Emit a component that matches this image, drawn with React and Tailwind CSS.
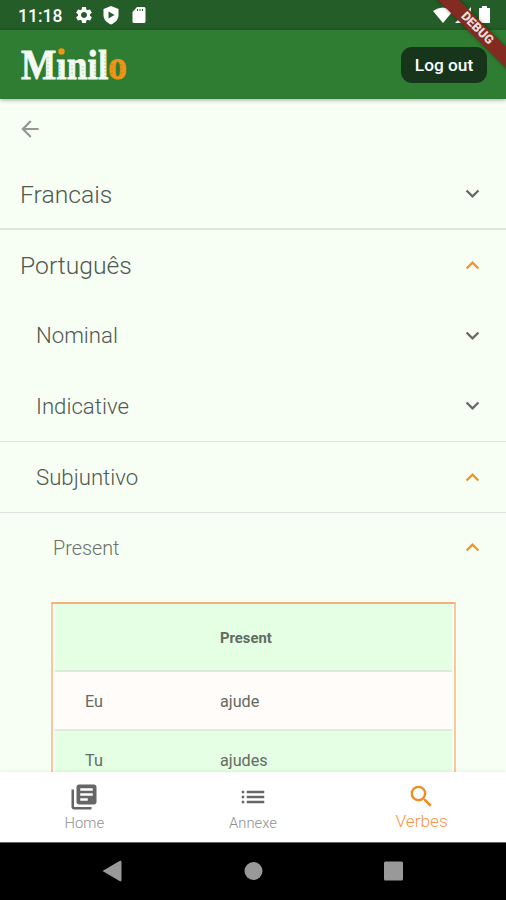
import { MdArrowBack, MdExpandLess, MdExpandMore, MdLibraryBooks, MdList, MdSearch, MdSettings } from 'react-icons/md';

const rows = [
    { label: 'Francais', open: false, text: 'pl-5 text-[24.7px] text-[#505850]', border: 'border-b-2 border-[#dfe7dd]', height: 'h-[71px]' },
    { label: 'Português', open: true, text: 'pl-5 text-[24.7px] text-[#505850]', border: '', height: 'h-[70px]' },
    { label: 'Nominal', open: false, text: 'pl-9 text-[22.2px] text-[#505850]', border: '', height: 'h-[70px]' },
    { label: 'Indicative', open: false, text: 'pl-9 text-[22.2px] text-[#505850]', border: 'border-b border-[#dde4db]', height: 'h-[72px]' },
    { label: 'Subjuntivo', open: true, text: 'pl-9 text-[22.2px] text-[#505850]', border: 'border-b border-[#dde4db]', height: 'h-[71px]' },
    { label: 'Present', open: true, text: 'pl-[53px] text-[19.8px] text-[#687068]', border: '', height: 'h-[69px]' },
];

const verbs = [
    { pronoun: 'Eu', form: 'ajude', bg: 'bg-[#fffcfa]' },
    { pronoun: 'Tu', form: 'ajudes', bg: 'bg-[#e4ffe4]' },
];

function Logo() {
    return (
        <svg width="112" height="50" viewBox="0 -6 112 50" className="block overflow-visible">
            <text
                x="1"
                y="33"
                textLength="106"
                lengthAdjust="spacingAndGlyphs"
                fontFamily="'Liberation Serif', serif"
                fontWeight="700"
                fontSize="42"
                fill="#f4faf2"
                stroke="#f4faf2"
                strokeWidth="0.8"
            >
                Mınil<tspan fill="#ef9417" stroke="#ef9417">o</tspan>
            </text>
            <circle cx="41.500" cy="5.500" r="3.200" fill="#ef9417" />
            {/* chalk texture */}
            <path d="M28 11v20M40 18v13M52 19v11M63 20v10M75 18v12M85 8v22" stroke="#2f7d32" strokeWidth="1" strokeDasharray="1.5 2" opacity=".4" />
            <path d="M92 18v12M101 18v12" stroke="#2f7d32" strokeWidth="1" strokeDasharray="2 2" opacity=".3" />
        </svg>
    );
}

function StatusBar() {
    return (
        <div className="flex h-[30px] shrink-0 items-center bg-[#245d27] pl-[18px] pr-[14px] text-white">
            <span className="w-[45px] pt-[3px] text-[17.5px] leading-none font-medium">11:18</span>
            <MdSettings className="ml-[11px]" size={20} />
            <svg className="ml-[8px]" width="18" height="20" viewBox="0 0 18 20">
                <path d="M9 1l7.500 3v6c0 4.500-3 7.500-7.500 9.500-4.500-2-7.500-5-7.500-9.500V4z" fill="currentColor" />
                <path d="M6.500 6.500l6 3.500-6 3.500z" fill="#245d27" />
            </svg>
            <svg className="ml-[11px]" width="16" height="18" viewBox="0 0 16 18">
                <path d="M6 1h7q1.500 0 1.500 1.500v13q0 1.500-1.500 1.500H3q-1.500 0-1.500-1.500V6z" fill="currentColor" />
                <path d="M6.500 3v2M9 3v2M11.500 3v2" stroke="#245d27" />
            </svg>
            <svg className="ml-auto" width="59" height="20" viewBox="0 0 59 20" fill="currentColor">
                <path d="M0 6q9.500-7 20 0l-10 12z" />
                <path d="M22 18L38 2v16z" />
                <path d="M46 3h3V1h5v2h3v15H46z" />
            </svg>
        </div>
    );
}

export default function App() {
    return (
        <div className="relative flex h-[900px] w-[506px] flex-col overflow-hidden bg-[#f7fff5] font-['Roboto',sans-serif]">
            <StatusBar />
            <header className="z-10 flex h-[69px] shrink-0 items-center justify-between bg-[#2f7d32] pl-5 pr-[19px] shadow-[0_1px_4px_rgba(0,0,0,0.35)]">
                <Logo />
                <button className="h-9 w-[86px] rounded-[11px] bg-[#17351a] pt-[2px] text-[17.3px] font-medium text-white">Log out</button>
            </header>

            <main className="flex min-h-0 flex-1 flex-col overflow-hidden">
                <div className="flex h-[60px] shrink-0 items-center pl-[17px] text-[#929991]">
                    <MdArrowBack size={26} />
                </div>
                {rows.map((row) => (
                    <div key={row.label} className={`flex shrink-0 items-center justify-between pr-[20px] font-light ${row.height} ${row.text} ${row.border}`}>
                        <span className="pt-[2px]">{row.label}</span>
                        {row.open ? <MdExpandLess size={27} color="#f39325" /> : <MdExpandMore size={27} color="#626a61" />}
                    </div>
                ))}
                <div className="mt-[20px] ml-[51px] w-[405px] shrink-0 border-2 border-[#f8c79c] border-t-[#f3b27b] px-[2px] text-[16.2px] text-[#626b62]">
                    <div className="flex h-[68px] items-center border-b-2 border-[#dcebda] bg-[#e4ffe4] pl-[165px] pt-[2px] text-[14.8px] font-bold">Present</div>
                    {verbs.map((verb) => (
                        <div key={verb.pronoun} className={`flex h-[59px] items-center border-b-2 border-[#dcebda] pl-[30px] pt-[4px] ${verb.bg}`}>
                            <span className="w-[135px]">{verb.pronoun}</span>
                            <span>{verb.form}</span>
                        </div>
                    ))}
                </div>
            </main>

            <nav className="z-10 grid h-[70px] shrink-0 grid-cols-3 bg-white font-light text-[#8f8f8f] shadow-[0_-1px_4px_rgba(0,0,0,0.06)]">
                <div className="flex flex-col items-center pt-[10px]">
                    <MdLibraryBooks size={30} color="#666" />
                    <span className="mt-px text-[14.8px] leading-5">Home</span>
                </div>
                <div className="flex flex-col items-center pt-[10px]">
                    <MdList size={30} color="#666" />
                    <span className="mt-px text-[14.8px] leading-5">Annexe</span>
                </div>
                <div className="flex flex-col items-center pt-[10px] text-[#f7944a]">
                    <MdSearch size={29} color="#f28c1c" />
                    <span className="text-[17.3px] leading-5">Verbes</span>
                </div>
            </nav>

            <div className="h-[58px] shrink-0 border-t border-[#666] bg-black">
                <svg width="506" height="57" viewBox="0 0 506 57" fill="#999">
                    <path d="M102.500 28l17-10q2-1 2 1v18q0 2-2 1z" />
                    <circle cx="253.500" cy="28" r="9" />
                    <rect x="384" y="18.500" width="19" height="19" rx="1.500" />
                </svg>
            </div>

            {/* debug ribbon */}
            <div className="absolute top-[21px] left-[412px] z-20 flex h-[15px] w-[130px] rotate-45 items-center justify-center bg-[#832a21] text-[12.5px] font-black text-[#e9dedb] shadow-[0_0_4px_rgba(0,0,0,0.4)]">
                DEBUG
            </div>
        </div>
    );
}
